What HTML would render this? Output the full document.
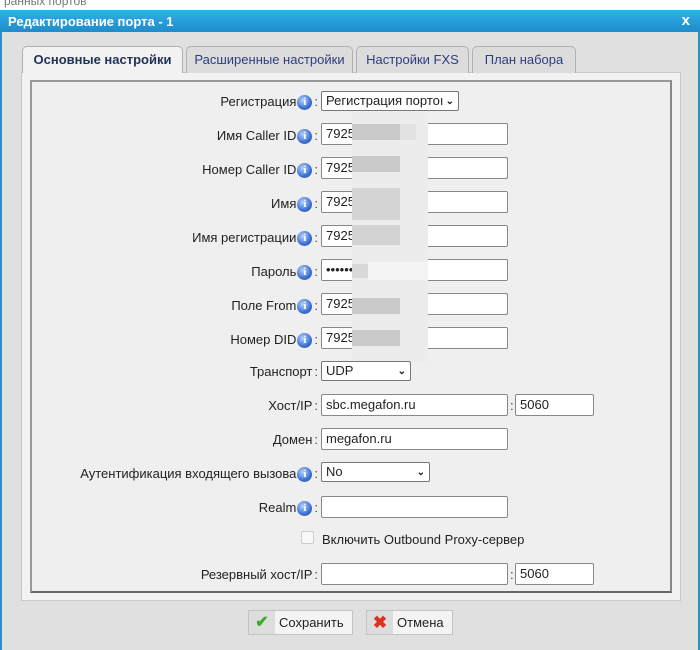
<!DOCTYPE html>
<html><head><meta charset="utf-8"><style>
*{box-sizing:border-box;margin:0;padding:0}
body{width:700px;height:644px;overflow:hidden;background:#fff;font-family:"Liberation Sans",Arial,sans-serif;font-size:13px;color:#222;position:relative}
.abs{position:absolute}
.bg{left:0;top:-6px;font-size:12px;color:#777;padding-left:4px}
.dlg{left:0;top:10px;width:700px;height:640px;background:#e0e0e0;border-left:2px solid #2a8fc6;border-right:2px solid #2a8fc6}
.title{left:0;top:10px;width:700px;height:22px;background:linear-gradient(#2fb0e8,#1f8ccb);color:#fff;font-weight:bold;font-size:13px;padding:4px 8px}
.x{right:10px;top:12px;color:#fff;font-weight:bold;font-size:15px}
.tab{top:46px;height:27px;background:#dcdcdc;border:1px solid #b0b0b0;border-bottom:none;border-radius:5px 5px 0 0;text-align:center;line-height:25px;color:#2e3d80;font-size:13px}
.tab.a{background:#f2f2f2;height:27px;font-weight:bold;color:#223355;z-index:2}
.panel{left:21px;top:72px;width:660px;height:529px;background:#f2f2f2;border:1px solid #c8c8c8}
.inner{left:30px;top:80px;width:642px;height:513px;background:#efefef;border:2px solid #888;border-bottom-color:#666;border-top-color:#999;border-left-color:#999}
.lbl{right:382px;text-align:right;white-space:nowrap;font-size:13px;color:#222}
.i{display:inline-block;width:15px;height:15px;border-radius:50%;background:radial-gradient(circle at 40% 35%,#b8d4ff,#3a6fd0 60%,#2a50a8);color:#fff;font:bold 11px "Liberation Serif",serif;text-align:center;line-height:15px;vertical-align:1px;margin-left:1px}
.c{color:#444;margin-left:2px}
.inp{left:321px;width:187px;height:22px;background:#fff;border:1px solid #888;border-radius:2px;padding:2px 4px;font-size:13px;line-height:16px}
.sel{height:20px;background:#fff;border:1px solid #777;border-radius:2px;padding:1px 4px;font-size:13px;line-height:16px}
.chev{position:absolute;right:4px;top:2px;font-size:10px;font-weight:bold}
.btn{top:610px;height:25px;background:#f4f4f4;border:1px solid #c4c4c4;font-size:13px;line-height:23px}
.ico{display:inline-block;width:26px;height:23px;background:#ddd;text-align:center;vertical-align:top;margin-right:4px}
</style></head><body>
<div class="abs bg">ранных портов</div>
<div class="abs dlg"></div>
<div class="abs title">Редактирование порта - 1</div>
<div class="abs x">x</div>
<div class="abs panel"></div>
<div class="abs tab a" style="left:22px;width:161px">Основные настройки</div>
<div class="abs tab" style="left:186px;width:167px">Расширенные настройки</div>
<div class="abs tab" style="left:356px;width:113px">Настройки FXS</div>
<div class="abs tab" style="left:472px;width:104px">План набора</div>
<div class="abs inner"></div>

<div class="abs lbl" style="top:94px">Регистрация<span class="i">i</span><span class="c">:</span></div>
<div class="abs sel" style="left:321px;top:91px;width:138px">Регистрация портоı<span class="chev">&#8964;</span></div>

<div class="abs lbl" style="top:128px">Имя Caller ID<span class="i">i</span><span class="c">:</span></div>
<div class="abs inp" style="top:123px">7925</div>
<div class="abs lbl" style="top:162px">Номер Caller ID<span class="i">i</span><span class="c">:</span></div>
<div class="abs inp" style="top:157px">7925</div>
<div class="abs lbl" style="top:196px">Имя<span class="i">i</span><span class="c">:</span></div>
<div class="abs inp" style="top:191px">7925</div>
<div class="abs lbl" style="top:230px">Имя регистрации<span class="i">i</span><span class="c">:</span></div>
<div class="abs inp" style="top:225px">7925</div>
<div class="abs lbl" style="top:264px">Пароль<span class="i">i</span><span class="c">:</span></div>
<div class="abs inp" style="top:259px">•••••••</div>
<div class="abs lbl" style="top:298px">Поле From<span class="i">i</span><span class="c">:</span></div>
<div class="abs inp" style="top:293px">7925</div>
<div class="abs lbl" style="top:332px">Номер DID<span class="i">i</span><span class="c">:</span></div>
<div class="abs inp" style="top:327px">7925</div>

<!-- blur -->
<div class="abs" style="left:352px;top:112px;width:76px;height:250px;background:#ececec"></div>
<div class="abs" style="left:352px;top:124px;width:48px;height:16px;background:#cacaca"></div>
<div class="abs" style="left:400px;top:124px;width:16px;height:16px;background:#e2e2e2"></div>
<div class="abs" style="left:352px;top:156px;width:48px;height:16px;background:#cacaca"></div>
<div class="abs" style="left:352px;top:188px;width:48px;height:32px;background:#d4d4d4"></div>
<div class="abs" style="left:352px;top:225px;width:48px;height:20px;background:#d2d2d2"></div>
<div class="abs" style="left:352px;top:264px;width:16px;height:14px;background:#d8d8d8"></div>
<div class="abs" style="left:368px;top:262px;width:60px;height:18px;background:#f4f4f4"></div>
<div class="abs" style="left:352px;top:298px;width:48px;height:16px;background:#cacaca"></div>
<div class="abs" style="left:352px;top:330px;width:48px;height:16px;background:#cacaca"></div>

<div class="abs lbl" style="top:364px">Транспорт<span class="c">:</span></div>
<div class="abs sel" style="left:321px;top:361px;width:90px">UDP<span class="chev">&#8964;</span></div>
<div class="abs lbl" style="top:398px">Хост/IP<span class="c">:</span></div>
<div class="abs inp" style="top:394px">sbc.megafon.ru</div>
<div class="abs" style="left:510px;top:398px;color:#444">:</div>
<div class="abs inp" style="left:515px;top:394px;width:79px">5060</div>
<div class="abs lbl" style="top:432px">Домен<span class="c">:</span></div>
<div class="abs inp" style="top:428px">megafon.ru</div>
<div class="abs lbl" style="top:466px">Аутентификация входящего вызова<span class="i">i</span><span class="c">:</span></div>
<div class="abs sel" style="left:321px;top:462px;width:109px">No<span class="chev">&#8964;</span></div>
<div class="abs lbl" style="top:500px">Realm<span class="i">i</span><span class="c">:</span></div>
<div class="abs inp" style="top:496px"></div>
<div class="abs" style="left:301px;top:531px;width:13px;height:13px;border:1px solid #ccc;border-radius:2px;background:#f8f8f8"></div>
<div class="abs" style="left:322px;top:532px">Включить Outbound Proxy-сервер</div>
<div class="abs lbl" style="top:567px">Резервный хост/IP<span class="c">:</span></div>
<div class="abs inp" style="top:563px"></div>
<div class="abs" style="left:510px;top:567px;color:#444">:</div>
<div class="abs inp" style="left:515px;top:563px;width:79px">5060</div>

<div class="abs btn" style="left:248px;width:105px"><span class="ico" style="color:#3aaa2a;font-weight:bold;font-size:16px">✔</span>Сохранить</div>
<div class="abs btn" style="left:366px;width:87px"><span class="ico" style="color:#e03020;font-weight:bold;font-size:17px">✖</span>Отмена</div>
</body></html>
